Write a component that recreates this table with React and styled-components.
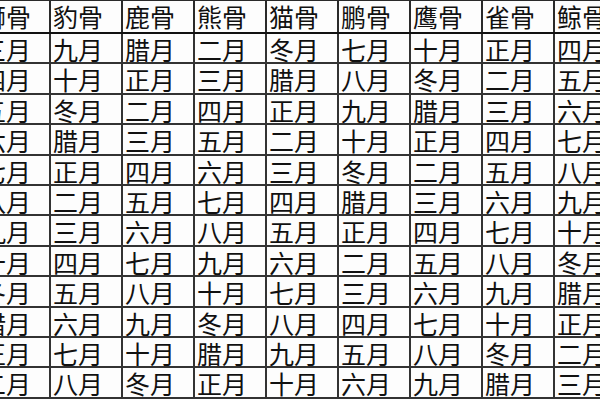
import React from 'react'
import styled, { createGlobalStyle } from 'styled-components'

const months = ['正', '二', '三', '四', '五', '六', '七', '八', '九', '十', '冬', '腊']

const columns = [
    { name: '狮', start: 2 },
    { name: '豹', start: 8 },
    { name: '鹿', start: 11 },
    { name: '熊', start: 1 },
    { name: '猫', start: 10 },
    { name: '鹏', start: 6 },
    { name: '鹰', start: 9 },
    { name: '雀', start: 0 },
    { name: '鲸', start: 3 },
]

const GlobalStyle = createGlobalStyle`
    html, body {
        margin: 0;
        padding: 0;
        background: #fff;
    }
    body {
        width: 600px;
        height: 400px;
        overflow: hidden;
    }
`

const App = () => {
    return (
        <Frame>
            <GlobalStyle />
            <Table>
                <colgroup>
                    {columns.map(c => <col key={c.name} />)}
                </colgroup>
                <thead>
                    <HeadRow>
                        {columns.map(c => <Th key={c.name}>{c.name}骨</Th>)}
                    </HeadRow>
                </thead>
                <tbody>
                    {months.map((_, row) => (
                        <Row key={row}>
                            {columns.map(c => (
                                <Td key={c.name}>{months[(c.start + row) % 12]}月</Td>
                            ))}
                        </Row>
                    ))}
                </tbody>
            </Table>
        </Frame>
    )
}

export default App

const Frame = styled.div`
    width: 600px;
    height: 400px;
    overflow: hidden;
    background: #fdfdfd;
`;

const Table = styled.table`
    margin-left: -23px;
    margin-top: -1px;
    border-collapse: collapse;
    table-layout: fixed;
    width: 648px;
    font-family: "Noto Sans CJK SC", "Noto Sans CJK JP", sans-serif;
    color: #111;

    col {
        width: 72px;
    }
`;

const HeadRow = styled.tr`
    height: 33px;
`;

const Row = styled.tr`
    height: 30.4px;
`;

const Th = styled.th`
    border: 2px solid #2a2a2a;
    border-bottom-color: #111;
    padding: 3px 0 0 2px;
    font-size: 25px;
    line-height: 25px;
    font-weight: 400;
    text-align: left;
    vertical-align: top;
    white-space: nowrap;
    overflow: hidden;
`;

const Td = styled.td`
    border: 2px solid #333;
    padding: 3px 0 0 2px;
    font-size: 25px;
    line-height: 24px;
    text-align: left;
    vertical-align: top;
    white-space: nowrap;
    overflow: hidden;
`;
